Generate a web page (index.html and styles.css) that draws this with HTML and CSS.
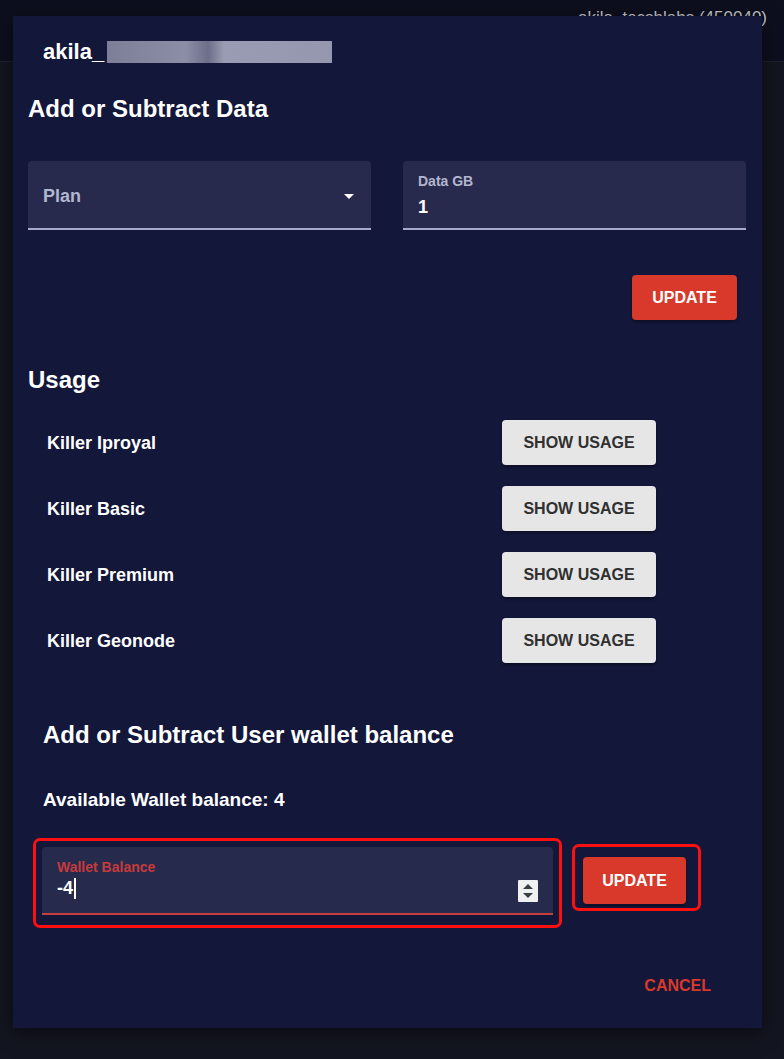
FILE: index.html
```html
<!DOCTYPE html>
<html lang="en">
<head>
<meta charset="utf-8">
<title>Edit user</title>
<link rel="stylesheet" href="styles.css">
</head>
<body>
<div class="topbar"><span class="topbar-user">akila_tecshlabs (450040)</span></div>

<div class="dialog">
  <div class="user-title">akila_<span class="blurred"></span></div>

  <h2 class="section-title">Add or Subtract Data</h2>
  <div class="fields">
    <div class="field select-field">
      <span class="placeholder">Plan</span>
      <span class="caret"></span>
    </div>
    <div class="field text-field">
      <span class="field-label">Data GB</span>
      <span class="field-value">1</span>
    </div>
  </div>
  <div class="actions-row">
    <button class="btn-red">UPDATE</button>
  </div>

  <h2 class="section-title usage-title">Usage</h2>
  <div class="usage-list">
    <div class="usage-row"><span class="usage-name">Killer Iproyal</span><button class="btn-light">SHOW USAGE</button></div>
    <div class="usage-row"><span class="usage-name">Killer Basic</span><button class="btn-light">SHOW USAGE</button></div>
    <div class="usage-row"><span class="usage-name">Killer Premium</span><button class="btn-light">SHOW USAGE</button></div>
    <div class="usage-row"><span class="usage-name">Killer Geonode</span><button class="btn-light">SHOW USAGE</button></div>
  </div>

  <div class="wallet">
    <h2 class="section-title wallet-title">Add or Subtract User wallet balance</h2>
    <p class="wallet-available">Available Wallet balance: 4</p>
    <div class="wallet-row">
      <div class="highlight wallet-box">
        <div class="wallet-field">
          <span class="wallet-label">Wallet Balance</span>
          <span class="wallet-value">-4<span class="cursor"></span></span>
          <span class="spinner">
            <svg width="20" height="22" viewBox="0 0 20 22"><rect x="0" y="0" width="20" height="22" rx="1" fill="#eef0f2"/><path d="M5 9 L10 4 L15 9 Z" fill="#3a3f44"/><path d="M5 13 L10 18 L15 13 Z" fill="#3a3f44"/></svg>
          </span>
        </div>
      </div>
      <div class="highlight update-box">
        <button class="btn-red btn-wallet">UPDATE</button>
      </div>
    </div>
  </div>

  <div class="cancel-row">
    <button class="btn-text">CANCEL</button>
  </div>
</div>
</body>
</html>
```

FILE: styles.css
```css
* { box-sizing: border-box; }

html, body {
  margin: 0;
  padding: 0;
}

body {
  width: 784px;
  height: 1059px;
  background: #131520;
  font-family: "Liberation Sans", Arial, sans-serif;
  font-weight: bold;
  color: #ffffff;
  overflow: hidden;
  position: relative;
}

.topbar {
  height: 62px;
  background: #0d0f1e;
  border-bottom: 1px solid #1d2030;
  display: flex;
  justify-content: flex-end;
  padding-right: 17px;
  padding-top: 9px;
}

.topbar-user {
  font-weight: normal;
  font-size: 17px;
  color: #c7c8d2;
  line-height: 18px;
}

.dialog {
  position: absolute;
  left: 13px;
  top: 16px;
  width: 749px;
  height: 1012px;
  background: #13173a;
  box-shadow: 0 4px 18px rgba(0, 0, 0, 0.5);
  padding: 24px 16px 0 15px;
}

.user-title {
  font-size: 22px;
  line-height: 24px;
  padding-left: 15px;
  display: flex;
  align-items: center;
}

.blurred {
  display: inline-block;
  width: 225px;
  height: 22px;
  margin-left: 3px;
  background: linear-gradient(90deg, #7d7f99 0%, #8c8ea7 35%, #6d6f8a 45%, #9a9cb3 52%, #9597ae 100%);
  filter: blur(0.6px);
}

.section-title {
  margin: 31px 0 0 0;
  font-size: 24px;
  line-height: 28px;
  font-weight: bold;
}

.fields {
  display: grid;
  grid-template-columns: 1fr 1fr;
  column-gap: 32px;
  margin-top: 38px;
}

.field {
  height: 69px;
  background: #272a4d;
  border-radius: 4px 4px 0 0;
  border-bottom: 2px solid #a6a9cc;
  padding-left: 15px;
}

.select-field {
  display: flex;
  align-items: center;
  justify-content: space-between;
  padding-right: 17px;
  padding-top: 3px;
}

.placeholder {
  font-size: 18px;
  color: #b3b6cf;
}

.caret {
  width: 0;
  height: 0;
  border-left: 5px solid transparent;
  border-right: 5px solid transparent;
  border-top: 5px solid #ffffff;
}

.text-field {
  display: flex;
  flex-direction: column;
  padding-top: 12px;
}

.field-label {
  font-size: 14px;
  line-height: 16px;
  color: #b3b6cf;
}

.field-value {
  font-size: 18px;
  line-height: 22px;
  margin-top: 7px;
  color: #ffffff;
}

.actions-row {
  display: flex;
  justify-content: flex-end;
  margin-top: 45px;
  padding-right: 9px;
}

.btn-red {
  width: 105px;
  height: 45px;
  border: none;
  border-radius: 4px;
  background: #d8392a;
  color: #ffffff;
  font-family: "Liberation Sans", Arial, sans-serif;
  font-weight: bold;
  font-size: 16px;
  box-shadow: 0 2px 3px rgba(0, 0, 0, 0.35);
  padding: 0;
}

.usage-title {
  margin-top: 46px;
}

.usage-list {
  display: flex;
  flex-direction: column;
  gap: 21px;
  margin-top: 26px;
}

.usage-row {
  display: grid;
  grid-template-columns: 474px 154px;
  align-items: center;
  height: 45px;
}

.usage-name {
  font-size: 18px;
  padding-left: 19px;
  padding-top: 1px;
}

.btn-light {
  height: 45px;
  border: none;
  border-radius: 4px;
  background: #e6e6e6;
  color: #303030;
  font-family: "Liberation Sans", Arial, sans-serif;
  font-weight: bold;
  font-size: 16px;
  box-shadow: 0 2px 3px rgba(0, 0, 0, 0.4);
  padding: 0;
}

.wallet {
  padding-left: 5px;
}

.wallet-title {
  margin-top: 58px;
  padding-left: 10px;
}

.wallet-available {
  margin: 40px 0 0 0;
  padding-left: 10px;
  font-size: 19px;
  line-height: 22px;
}

.wallet-row {
  display: flex;
  align-items: flex-start;
  margin-top: 27px;
}

.highlight {
  border: 3px solid #ff1010;
  border-radius: 7px;
}

.wallet-box {
  width: 529px;
  height: 90px;
  padding: 6px 6px 10px 6px;
}

.wallet-field {
  position: relative;
  height: 68px;
  background: #262a4d;
  border-radius: 4px 4px 0 0;
  border-bottom: 2px solid #c8403e;
  padding: 12px 0 0 15px;
  display: flex;
  flex-direction: column;
}

.wallet-label {
  font-size: 14px;
  line-height: 16px;
  color: #c63b3b;
}

.wallet-value {
  font-size: 18px;
  line-height: 22px;
  margin-top: 2px;
  display: flex;
  align-items: center;
}

.cursor {
  display: inline-block;
  width: 2px;
  height: 21px;
  background: #ffffff;
  margin-left: 1px;
}

.spinner {
  position: absolute;
  right: 15px;
  top: 33px;
  width: 20px;
  height: 22px;
  display: block;
}

.spinner svg {
  display: block;
}

.update-box {
  width: 129px;
  height: 67px;
  margin-left: 10px;
  margin-top: 6px;
  padding: 10px 12px 4px 8px;
}

.btn-wallet {
  width: 103px;
  height: 47px;
}

.cancel-row {
  display: flex;
  justify-content: flex-end;
  margin-top: 48px;
  padding-right: 35px;
}

.btn-text {
  border: none;
  background: transparent;
  color: #d8392a;
  font-family: "Liberation Sans", Arial, sans-serif;
  font-weight: bold;
  font-size: 16px;
  line-height: 20px;
  padding: 0;
}
```
